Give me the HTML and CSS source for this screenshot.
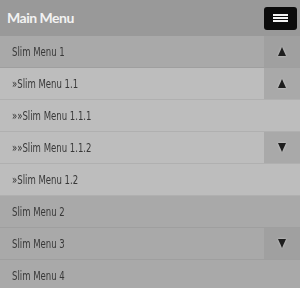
FILE: index.html
```html
<!DOCTYPE html>
<html>
<head>
<meta charset="utf-8">
<link rel="stylesheet" href="styles.css">
</head>
<body>
<nav class="menu">
  <div class="menu-head">
    <span class="menu-title">Main Menu</span>
    <button class="burger" aria-label="Toggle menu"><span></span><span></span><span></span></button>
  </div>
  <ul class="items">
    <li class="row lvl1"><span class="label"><span class="txt">Slim Menu 1</span></span><span class="toggle up"></span></li>
    <li class="row lvl2"><span class="label"><span class="txt">»Slim Menu 1.1</span></span><span class="toggle up"></span></li>
    <li class="row lvl2"><span class="label"><span class="txt">»»Slim Menu 1.1.1</span></span></li>
    <li class="row lvl2"><span class="label"><span class="txt">»»Slim Menu 1.1.2</span></span><span class="toggle down"></span></li>
    <li class="row lvl2"><span class="label"><span class="txt">»Slim Menu 1.2</span></span></li>
    <li class="row lvl1"><span class="label"><span class="txt">Slim Menu 2</span></span></li>
    <li class="row lvl1"><span class="label"><span class="txt">Slim Menu 3</span></span><span class="toggle down"></span></li>
    <li class="row lvl1"><span class="label"><span class="txt">Slim Menu 4</span></span></li>
  </ul>
</nav>
</body>
</html>
```
FILE: styles.css
```css
html, body {
  margin: 0;
  padding: 0;
  background: #a8a8a8;
}
.menu {
  width: 300px;
  height: 288px;
  overflow: hidden;
}
.menu-head {
  height: 36px;
  background: #999999;
  display: flex;
  align-items: center;
  justify-content: space-between;
  padding: 0 3px 0 7px;
}
.menu-title {
  font-family: Lato, "Open Sans", sans-serif;
  font-weight: bold;
  font-size: 14px;
  letter-spacing: -0.5px;
  color: #f2f2f2;
  margin-top: -1px;
}
.burger {
  width: 33px;
  height: 23px;
  background: #0c0c0c;
  border: 0;
  border-radius: 3px;
  padding: 0;
  display: flex;
  flex-direction: column;
  align-items: center;
  justify-content: center;
  gap: 1px;
}
.burger span {
  display: block;
  width: 15px;
  height: 2px;
  background: #f4f4f4;
}
.items {
  list-style: none;
  margin: 0;
  padding: 0;
}
.row {
  height: 31px;
  display: flex;
  align-items: stretch;
  border-bottom: 1px solid #b0b0b0;
  font-family: "DejaVu Sans Condensed", "DejaVu Sans", sans-serif;
  font-size: 13px;
  color: #383838;
}
.lvl1 { background: #a9a9a9; border-bottom-color: #9f9f9f; }
.lvl2 { background: #bdbdbd; border-bottom-color: #b0b0b0; }
.label {
  flex: 1;
  display: flex;
  align-items: center;
  padding-left: 12px;
}
.txt {
  display: inline-block;
  white-space: nowrap;
  transform: scaleX(0.73);
  transform-origin: left center;
}
.toggle {
  width: 36px;
  display: flex;
  align-items: center;
  justify-content: center;
  background: #a0a0a0;
}
.lvl2 .toggle { background: #a9a9a9; }
.toggle::before {
  content: "";
  width: 0;
  height: 0;
  border-left: 4.5px solid transparent;
  border-right: 4.5px solid transparent;
  filter: drop-shadow(0 0 1px rgba(255,255,255,0.5));
}
.toggle.up::before { border-bottom: 9px solid #1e1e1e; }
.toggle.down::before { border-top: 9px solid #1e1e1e; }
```
